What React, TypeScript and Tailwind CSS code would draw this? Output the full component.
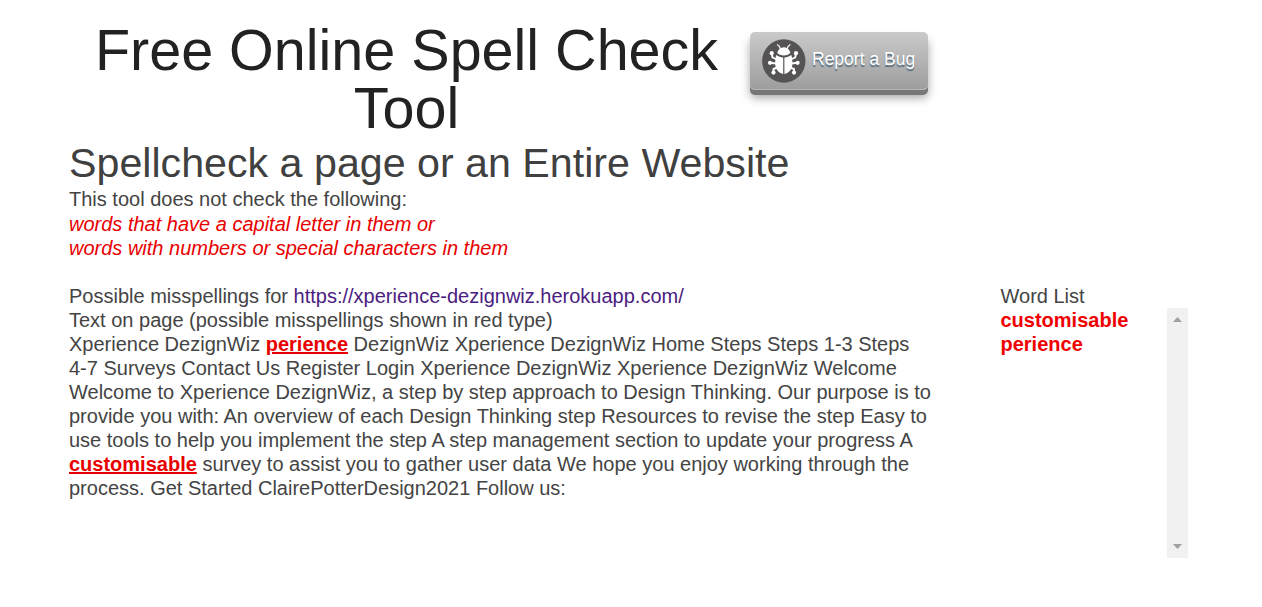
function BugIcon() {
  return (
    <svg viewBox="0 0 44 44" className="mb-px size-11 shrink-0">
      <circle cx="21.800" cy="22" r="21.700" fill="#555354" />
      <g stroke="#fff" fill="none" strokeWidth="1.900" strokeLinecap="round" strokeLinejoin="round">
        <path d="M18.500 10C18 8 17 6.500 15.500 5.700M25 10c.5-2 1.500-3.500 3-4.300" strokeWidth="1.200" />
        <path d="M15 20.500 10.500 18.500 9.700 14.200M14 24.500 8 23.800M15.500 28.500 11.500 30V33.800M28.500 20.500 33.200 18.500 34 14.200M29.500 24.500 35.500 23.800M28 28.500 32 30V33.800" />
      </g>
      <g fill="#fff">
        <path d="M15.200 13.800C16.200 10.500 18.800 8.300 21.800 8.300S27.400 10.500 28.400 13.800C27 15.600 24.500 16.600 21.800 16.600S16.600 15.600 15.200 13.800Z" />
        <path d="M14.300 16C16.500 17.700 18.700 18.400 21.200 18.600V35C16.500 34 13.200 30 13.200 24.500 13.200 21 13.500 18 14.300 16ZM29.300 16C27.100 17.700 24.900 18.400 22.400 18.600V35C27.100 34 30.400 30 30.400 24.500 30.400 21 30.100 18 29.300 16Z" />
        <circle cx="9.700" cy="14.200" r="2.100" /><circle cx="34" cy="14.200" r="2.100" />
        <circle cx="8" cy="23.800" r="2.100" /><circle cx="35.600" cy="23.800" r="2.100" />
        <circle cx="11.500" cy="33.600" r="2.100" /><circle cx="32" cy="33.600" r="2.100" />
      </g>
    </svg>
  );
}

export default function App() {
  return (
    <div className="min-h-screen overflow-hidden bg-white pl-[69px] font-['Liberation_Sans',Arial,sans-serif] text-[20px] leading-6 text-[#444]">
      <header className="flex h-[137px] items-start pt-[21px]">
        <h1 className="w-[675px] text-center text-[57.5px] leading-[58px] whitespace-nowrap text-[#222]">
          Free Online Spell Check<br />Tool
        </h1>
        <button className="mt-[11px] ml-[6px] flex h-[58px] w-[178px] items-center rounded-[5px] bg-linear-to-b from-[#cacaca] to-[#9d9d9d] pl-3 text-[17.5px] text-white shadow-[inset_0_-1px_0_#b5b5b5,0_5px_0_#777,0_8px_10px_rgba(0,0,0,0.35)]">
          <BugIcon />
          <span className="mb-[5px] ml-[6px] whitespace-nowrap [text-shadow:0_2px_1px_#526a7e]">Report a Bug</span>
        </button>
      </header>
      <h2 className="h-[50px] pt-1 text-[41.2px] leading-[45px] whitespace-nowrap text-[#404040]">Spellcheck a page or an Entire Website</h2>
      <p className="whitespace-nowrap">This tool does not check the following:</p>
      <p className="mt-px whitespace-nowrap text-[#e80000] italic">
        words that have a capital letter in them or<br />
        words with numbers or special characters in them
      </p>
      <main className="mt-6 flex items-start">
        <section className="w-[931.5px] shrink-0 whitespace-nowrap">
          <p>Possible misspellings for <a className="text-[#4b2080]">https://xperience-dezignwiz.herokuapp.com/</a></p>
          <p>Text on page (possible misspellings shown in red type)</p>
          <p>
            Xperience DezignWiz <b className="text-[#e80000] underline">perience</b> DezignWiz Xperience DezignWiz Home Steps Steps 1-3 Steps<br />
            4-7 Surveys Contact Us Register Login Xperience DezignWiz Xperience DezignWiz Welcome<br />
            Welcome to Xperience DezignWiz, a step by step approach to Design Thinking. Our purpose is to<br />
            provide you with: An overview of each Design Thinking step Resources to revise the step Easy to<br />
            use tools to help you implement the step A step management section to update your progress A<br />
            <b className="text-[#e80000] underline">customisable</b> survey to assist you to gather user data We hope you enjoy working through the<br />
            process. Get Started ClairePotterDesign2021 Follow us:
          </p>
        </section>
        <aside className="w-[187.5px] shrink-0">
          <h3>Word List</h3>
          <div className="flex h-[250px] justify-between">
            <p className="font-bold text-[#f00000]">customisable<br />perience</p>
            <div className="flex w-[21px] flex-col items-center justify-between bg-[#f1f1f1] pt-[9px] pb-[9px]">
              <svg className="h-[5px] w-[9px]" viewBox="0 0 9 5"><path d="M4.500 0 9 5H0Z" fill="#a0a0a0" /></svg>
              <svg className="h-[5px] w-[9px]" viewBox="0 0 9 5"><path d="M0 0H9L4.500 5Z" fill="#a0a0a0" /></svg>
            </div>
          </div>
        </aside>
      </main>
    </div>
  );
}
